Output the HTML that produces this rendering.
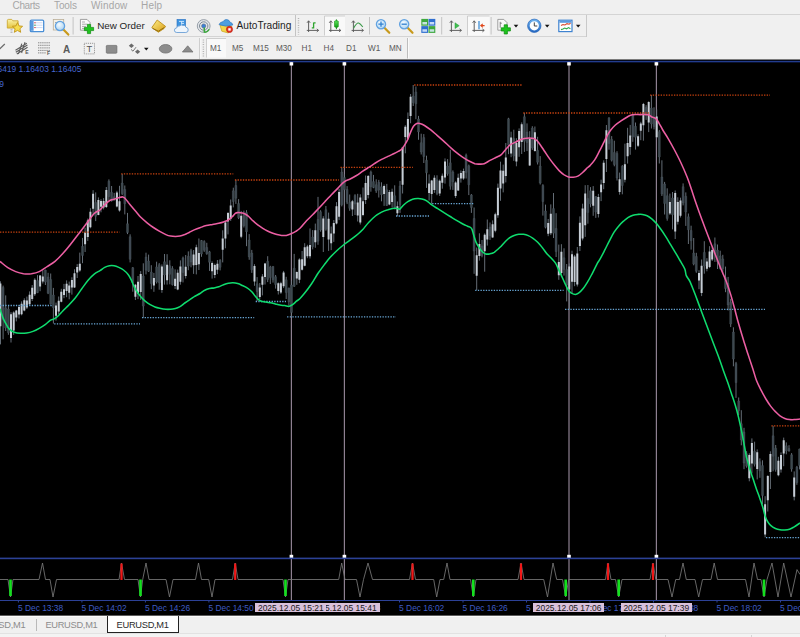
<!DOCTYPE html>
<html><head><meta charset="utf-8"><title>EURUSD,M1</title>
<style>
html,body{margin:0;padding:0;}
body{width:800px;height:637px;overflow:hidden;background:#000;font-family:"Liberation Sans","DejaVu Sans",sans-serif;position:relative;}
.abs{position:absolute;}
#top{left:0;top:0;width:800px;height:59px;background:#f0f0f0;}
#menu span{position:absolute;top:0.3px;font-size:10px;color:#a6a6a6;line-height:1.15;}
.hsep{position:absolute;left:0;width:800px;height:1px;background:#d4d4d4;}
#navy{left:0;top:59px;width:800px;height:4px;background:linear-gradient(#7c7c7c 0,#7c7c7c 25%,#050a1c 25%,#050a1c 50%,#223c8e 50%,#223c8e 75%,#0a1230 75%,#0a1230 100%);}
.chart{position:absolute;left:0;top:61px;}
.ctext{position:absolute;font-size:8.4px;color:#4666cf;white-space:nowrap;}
.tl{position:absolute;top:603.8px;font-size:8.4px;color:#3f5cc4;white-space:nowrap;line-height:1.15;}
.tb{position:absolute;top:603px;height:9.4px;line-height:10.6px;font-size:8.45px;color:#1a1a1a;background:#d9c1db;white-space:nowrap;overflow:hidden;text-align:center;}
.tt{position:absolute;white-space:nowrap;line-height:1.15;}
.tf{position:absolute;top:44.3px;font-size:8.2px;color:#5a5a5a;white-space:nowrap;line-height:1.15;}
#tabs{left:0;top:615px;width:800px;height:22px;background:#f0f0f0;}
.tab{position:absolute;top:5.3px;font-size:9.3px;letter-spacing:-0.3px;white-space:nowrap;line-height:1.15;}
</style></head><body>
<div id="top" class="abs">
 <div id="menu">
  <span style="left:12.6px;letter-spacing:-0.4px">Charts</span><span style="left:54px;letter-spacing:-0.1px">Tools</span><span style="left:91px;letter-spacing:0.15px">Window</span><span style="left:141px;letter-spacing:0.2px">Help</span>
 </div>
 <div class="hsep" style="top:14px"></div>
 <div class="hsep" style="top:36.1px;width:587px"></div>
 <svg class="abs" style="left:0;top:0" width="800" height="60" viewBox="0 0 800 60">
<defs>
<linearGradient id="gold" x1="0" y1="0" x2="1" y2="1"><stop offset="0" stop-color="#fdf08a"/><stop offset="1" stop-color="#d99a12"/></linearGradient>
<linearGradient id="fold" x1="0" y1="0" x2="0" y2="1"><stop offset="0" stop-color="#fbf3a8"/><stop offset="1" stop-color="#e4c23c"/></linearGradient>
<linearGradient id="blu" x1="0" y1="0" x2="0" y2="1"><stop offset="0" stop-color="#6fb2ee"/><stop offset="1" stop-color="#2a6cc4"/></linearGradient>
<linearGradient id="grn" x1="0" y1="0" x2="0" y2="1"><stop offset="0" stop-color="#5ce35c"/><stop offset="1" stop-color="#12a012"/></linearGradient>
<radialGradient id="lens" cx="0.4" cy="0.35" r="0.7"><stop offset="0" stop-color="#f4fbff"/><stop offset="1" stop-color="#a9d2f1"/></radialGradient>
<g id="plus"><path d="M-1.6 -4.6h3.2v3h3v3.2h-3v3h-3.2v-3h-3v-3.2h3z" fill="#1fc41f" stroke="#0c8a0c" stroke-width="0.7"/></g>
<g id="dd"><path d="M-2.3 -1.2h4.6l-2.3 2.6z" fill="#111"/></g>
<g id="axes" stroke="#585858" stroke-width="0.95" fill="none"><path d="M0 -9.5V1.6M-1.8 0H10"/><path d="M-1.6 -7.6L0 -9.6L1.6 -7.6M8.2 -1.5L10 0L8.2 1.5" stroke-width="0.9"/></g>
<g id="mag"><path d="M3.4 3.6L8.3 8.6" stroke="#c89a1c" stroke-width="2.2" stroke-linecap="round"/><circle cx="0" cy="0" r="4.6" fill="url(#lens)" stroke="#62a2e0" stroke-width="1.3"/></g>
</defs>
<!-- toolbar 1 -->
<!-- folder + star -->
<path d="M7.3 20.6q0-1.2 1.2-1.2h3.2l1.2 1.4h5.2v7.3H7.3z" fill="url(#fold)" stroke="#c9a227" stroke-width="0.8"/>
<path d="M10.5 29.5h2M10.5 31h2M10.5 32.5h2" stroke="#999" stroke-width="0.6"/>
<path d="M17.5 22.6l1.5 3.3 3.6.4-2.7 2.4.8 3.6-3.2-1.9-3.2 1.9.8-3.6-2.7-2.4 3.6-.4z" fill="#f6dc4e" stroke="#c2951a" stroke-width="0.9" stroke-linejoin="round"/>
<!-- list icon -->
<rect x="30.3" y="20.2" width="13.4" height="11.4" rx="1.2" fill="#fff" stroke="#4a8fd6" stroke-width="1.3"/>
<rect x="31" y="21" width="2.6" height="9.8" fill="#5a9ade"/>
<path d="M34.5 22.8h8M34.5 25.2h8M34.5 27.6h8" stroke="#c8d8f4" stroke-width="1"/>
<path d="M34.2 22.8h1.5M34.2 27.6h1.5" stroke="#e04848" stroke-width="1"/><path d="M34.2 25.2h1.5" stroke="#3a9a4a" stroke-width="1"/>
<!-- chart magnifier -->
<rect x="53.3" y="19.4" width="10.4" height="10.6" fill="#f4f1e8" stroke="#b9ae98" stroke-width="0.8"/>
<path d="M55 22.500h1.500M58 22h1.500M61 22.500h1.500M55 27.500h7" stroke="#8a8a8a" stroke-width="0.700"/><use href="#mag" x="60" y="26"/>
<rect x="72.6" y="17" width="1" height="17.5" fill="#c3c3c3"/>
<!-- new order -->
<path d="M80.4 19.4h6.6l3 3v7.8h-9.6z" fill="#fafafa" stroke="#8a8a8a" stroke-width="0.8"/>
<path d="M82 22h3M82 24.2h5.5M82 26.4h4M82 28.4h3" stroke="#8a8a8a" stroke-width="0.7"/>
<use href="#plus" x="89" y="29"/>
<!-- gold book -->
<path d="M151.8 27.6L157.2 20L165.6 26.4L164 28.6L158.4 32.2Z" fill="url(#gold)" stroke="#b8860b" stroke-width="0.8" stroke-linejoin="round"/>
<path d="M152.6 28.4L158.4 31.2L164.4 27.4" stroke="#8a6508" stroke-width="0.9" fill="none"/>
<!-- cloud -->
<rect x="177" y="19.400" width="8.600" height="7.600" fill="#3f95e0" stroke="#2a70c0" stroke-width="0.600"/>
<path d="M179 21.400h5M181.600 21.400v4M181.600 23.400h2.400" stroke="#d8ecff" stroke-width="0.900"/>
<path d="M176.800 32.500q-2.400 0-2.400-2.300q0-2.100 2.300-2.300q.5-2.300 2.900-2q1.500-1.700 3.400-.5q2.400-.6 2.900 1.800q2.300.3 2.300 2.700q0 2.600-2.400 2.600z" fill="#eef5fc" stroke="#6b9fd6" stroke-width="0.900"/>
<!-- signal -->
<circle cx="203.7" cy="26" r="6.4" fill="#e4e7ea" stroke="#8d96a0" stroke-width="0.9"/>
<circle cx="203.7" cy="26" r="4.2" fill="none" stroke="#7f8a96" stroke-width="1"/>
<circle cx="203.7" cy="26" r="2.1" fill="#3a7fd8" stroke="#5a6a7a" stroke-width="0.6"/>
<path d="M204.300 27.500v5" stroke="#3aa83a" stroke-width="1.500" fill="none"/><path d="M204.300 32.400A6.400 6.400 0 0 0 209.300 29.200" stroke="#3aa83a" stroke-width="1.300" fill="none"/>
<!-- autotrading -->
<path d="M220 25.200l1.800 6 6.500 1.800 3.600-6.500z" fill="#f3d64a" stroke="#c9a21a" stroke-width="0.7"/>
<path d="M219 24.600q1-2.600 4.200-3q1.200-2.400 3.600-2q2.600.2 3 2.400q2.800.8 3 3q-6.800 2.400-13.800-.4z" fill="#4d9fe0" stroke="#2f77c0" stroke-width="0.7"/>
<circle cx="229.500" cy="29.400" r="3.100" fill="#e33222" stroke="#b11b10" stroke-width="0.6"/><rect x="228.300" y="28.200" width="2.400" height="2.400" fill="#fff"/>
<!-- sep + grip -->
<rect x="295" y="15" width="1" height="21" fill="#c3c3c3"/>
<path d="M298.500 18v16.500" stroke="#b4b4b4" stroke-width="1.400" stroke-dasharray="1 1.300"/>
<!-- bar chart -->
<use href="#axes" x="308.600" y="30.400"/>
<path d="M313.600 22.400v6.200M313.600 22.800h2M311.800 27.800h1.800" stroke="#2fa52f" stroke-width="1.300" fill="none"/>
<!-- candle (selected) -->
<rect x="324.500" y="16" width="20.500" height="19.500" fill="#f9f9f9"/><path d="M324.500 35.500V16H345" stroke="#c9c9c9" stroke-width="0.9" fill="none"/>
<use href="#axes" x="330.800" y="30.400"/>
<path d="M336.400 19.400v9.800" stroke="#1c8a1c" stroke-width="1"/><rect x="334.500" y="20.800" width="3.800" height="6.400" rx="0.800" fill="url(#grn)" stroke="#149014" stroke-width="0.600"/>
<!-- line chart -->
<use href="#axes" x="353.400" y="30.400"/>
<path d="M353.600 28.200q3-5.600 5-5.200q1.600.6 4.200 4" stroke="#3c9a4a" stroke-width="1.100" fill="none"/>
<rect x="369" y="17" width="1" height="17.500" fill="#c3c3c3"/>
<!-- zoom in/out -->
<use href="#mag" x="381" y="24.200"/><path d="M378.400 24.200h5.200M381 21.600v5.200" stroke="#2f7fd0" stroke-width="1.300"/>
<use href="#mag" x="404.200" y="24.200"/><path d="M401.600 24.200h5.200" stroke="#2f7fd0" stroke-width="1.300"/>
<!-- tiles -->
<rect x="421.300" y="18.900" width="6.800" height="6.800" fill="#3fa83f"/><rect x="428.500" y="18.900" width="6.800" height="6.800" fill="#2f6fd0"/>
<rect x="421.300" y="26.100" width="6.800" height="6.800" fill="#2f6fd0"/><rect x="428.500" y="26.100" width="6.800" height="6.800" fill="#3fa83f"/>
<path d="M422.400 22h4.600v2.600h-4.600zM429.600 22h4.600v2.600h-4.600zM422.400 29.200h4.600v2.600h-4.600zM429.600 29.200h4.600v2.600h-4.600z" fill="#dfeeff" opacity="0.850"/>
<rect x="441.200" y="17" width="1" height="17.500" fill="#c3c3c3"/>
<!-- shift -->
<use href="#axes" x="451.400" y="30.400"/>
<path d="M455 22.800v5.800l4.200-2.900z" fill="#3fbf4f" stroke="#2a9a3a" stroke-width="0.500"/>
<!-- autoscroll selected -->
<rect x="467.500" y="16" width="22" height="19.500" fill="#f9f9f9"/><path d="M467.500 35.500V16H489.500" stroke="#c9c9c9" stroke-width="0.900" fill="none"/>
<use href="#axes" x="474.200" y="30.400"/>
<path d="M479 21v8.200" stroke="#3f8fd6" stroke-width="1.300"/>
<path d="M484.600 25.600h-3.600M482.800 23.800l-2 1.800 2 1.800" stroke="#e0481c" stroke-width="1.100" fill="none"/>
<rect x="490.600" y="17" width="1" height="17.500" fill="#c3c3c3"/>
<!-- new chart -->
<path d="M497.800 19.400h6l3.200 3.200v7.600h-9.200z" fill="#fafafa" stroke="#8a8a8a" stroke-width="0.800"/>
<path d="M500.200 21.800v6M500.200 23.200h1.600" stroke="#666" stroke-width="0.800"/>
<use href="#plus" x="505.800" y="29.400"/>
<use href="#dd" x="516" y="26"/>
<!-- clock -->
<circle cx="534.300" cy="25.800" r="5.700" fill="#fff" stroke="url(#blu)" stroke-width="2.200"/>
<circle cx="534.300" cy="25.800" r="6.700" fill="none" stroke="#1d5db4" stroke-width="0.600"/>
<path d="M534.300 22.400v3.600h3" stroke="#444" stroke-width="1" fill="none"/>
<use href="#dd" x="547.200" y="26"/>
<!-- template -->
<rect x="558.800" y="20.200" width="13.200" height="11.400" fill="#fff" stroke="#3f83d0" stroke-width="1.200"/>
<rect x="559.400" y="20.800" width="12" height="2" fill="#5a9ade"/>
<path d="M561 25.600l2-1 2 .4 2-1.400 2 .6 1.600-1" stroke="#d8482c" stroke-width="1.100" fill="none"/>
<path d="M561 29.600l2-.6 1.600-1 2 .8 2-1.200 1.800 1.200" stroke="#2fa84a" stroke-width="1.100" fill="none"/>
<use href="#dd" x="578.200" y="26"/>
<rect x="586" y="15" width="1" height="22" fill="#c9c9c9"/>
<!-- toolbar 2 -->
<path d="M-0.500 49.200L4.800 44" stroke="#6a6a6a" stroke-width="1.200"/>
<g stroke="#5c5c5c" stroke-width="1.050" fill="none"><path d="M15.500 50.200L26.800 43.200M15.800 52.200L27.400 45M16.800 54L27.600 47.200M18.400 54L21.800 43.600M21.600 53L25 42.200" /></g>
<g stroke="#7a7a7a" stroke-width="0.900" stroke-dasharray="1.400 0.700"><path d="M38 42.800h12M38 45.300h12M38 47.900h12M38 50.400h12M38 52.900h8"/></g>
<rect x="84.300" y="43.300" width="10.200" height="10.600" fill="none" stroke="#7a7a7a" stroke-width="0.800" stroke-dasharray="1 0.900"/>
<rect x="106.300" y="45.400" width="10.600" height="7.800" rx="0.800" fill="#8c8c8c" stroke="#6a6a6a" stroke-width="0.700"/>
<path d="M131.400 43.600l2.600 2.200-2.600 2.200-2.600-2.200zM137.600 49.600l2.600 2.200-2.600 2.200-2.600-2.200z" fill="#6a6a6a"/><path d="M131 49.400l2 1.800 3-4" stroke="#6a6a6a" stroke-width="0.900" fill="none"/>
<use href="#dd" x="146.300" y="49"/>
<ellipse cx="165.600" cy="48.800" rx="6.300" ry="4.300" fill="#8c8c8c" stroke="#6a6a6a" stroke-width="0.700"/>
<path d="M182.400 52l5.300-6.200 5.300 6.200z" fill="#8c8c8c" stroke="#6a6a6a" stroke-width="0.700" stroke-linejoin="round"/>
<rect x="199.200" y="38" width="1" height="21" fill="#c6c6c6"/><rect x="200.200" y="38" width="1" height="21" fill="#fafafa"/><path d="M203.400 39.500v18" stroke="#b4b4b4" stroke-width="1.400" stroke-dasharray="1 1.300"/>
<rect x="206.500" y="38.500" width="19.500" height="19" fill="#f9f9f9"/><path d="M206.500 57.500V38.500H226" stroke="#c9c9c9" stroke-width="0.900" fill="none"/>
<rect x="407" y="38" width="1" height="20.500" fill="#bdbdbd"/><rect x="408" y="38" width="1" height="20.500" fill="#fafafa"/>
</svg>
<div class="tt" style="left:97.2px;top:20px;font-size:9.85px;color:#1e1e1e">New Order</div>
<div class="tt" style="left:236.6px;top:20px;font-size:10.15px;color:#1e1e1e">AutoTrading</div>
<div class="tt" style="left:25.200px;top:50.200px;font-size:5px;font-weight:bold;color:#555">E</div>
<div class="tt" style="left:47px;top:50.600px;font-size:5px;font-weight:bold;color:#555">F</div>
<div class="tt" style="left:63px;top:44px;font-size:10px;font-weight:bold;color:#5a5a5a">A</div>
<div class="tt" style="left:86.4px;top:44.4px;font-size:9.400px;color:#555">T</div>
<div class="tf" style="left:210px">M1</div><div class="tf" style="left:232px">M5</div><div class="tf" style="left:253px">M15</div><div class="tf" style="left:276px">M30</div><div class="tf" style="left:301.500px">H1</div><div class="tf" style="left:323.500px">H4</div><div class="tf" style="left:346px">D1</div><div class="tf" style="left:368px">W1</div><div class="tf" style="left:389px">MN</div>

</div>
<div id="navy" class="abs"></div>
<svg class="chart" width="800" height="555" viewBox="0 0 800 555"><defs><filter id="bl" x="0" y="0" width="100%" height="100%"><feGaussianBlur stdDeviation="0.35"/></filter></defs>
<rect x="290.8" y="1" width="1.2" height="539" fill="#8e8091"/>
<rect x="343.8" y="1" width="1.2" height="539" fill="#8e8091"/>
<rect x="568.4" y="1" width="1.2" height="539" fill="#8e8091"/>
<rect x="655.8" y="1" width="1.2" height="539" fill="#8e8091"/>
<g filter="url(#bl)"><path d="M0.5 220.3V283.4M3.1 224.6V278.3M5.7 234.4V270.0M8.4 245.1V273.8M11.0 251.2V281.5M13.7 250.3V273.9M16.3 248.9V260.4M19.0 244.0V257.4M21.6 240.4V254.3M24.3 237.3V250.3M26.9 235.6V248.0M29.6 230.4V244.5M32.2 224.0V240.0M34.8 217.2V235.0M37.5 214.1V232.1M40.1 214.0V230.2M42.8 209.3V222.5M45.4 208.7V224.0M48.1 211.8V233.1M50.7 212.5V243.5M53.4 226.9V262.6M56.0 241.6V259.6M58.7 235.5V253.2M61.3 227.8V241.3M64.0 222.9V237.2M66.6 219.4V236.2M69.2 220.6V238.3M71.9 216.3V233.6M74.5 208.3V226.8M77.2 203.1V217.0M79.8 191.6V210.8M82.5 176.9V202.2M85.1 166.7V191.0M87.8 157.6V179.9M90.4 147.2V167.3M93.1 129.2V153.8M95.7 131.4V160.1M98.4 136.4V154.2M101.0 138.2V151.3M103.6 137.1V148.4M106.3 126.0V147.0M108.9 118.4V139.0M111.6 125.0V140.6M114.2 131.9V139.6M116.9 129.8V146.4M119.5 124.8V150.7M122.2 113.0V134.0M124.8 124.5V153.4M127.5 151.9V173.1M130.1 173.3V201.4M132.8 206.0V230.7M135.4 222.9V239.0M138.0 215.0V238.1M140.7 210.1V238.9M143.3 202.3V256.7M146.0 191.7V213.4M148.6 193.6V211.0M151.3 204.2V228.2M153.9 211.9V230.8M156.6 200.7V222.5M159.2 202.1V228.7M161.9 203.4V231.8M164.5 193.0V223.6M167.1 193.2V223.6M169.8 199.3V223.3M172.4 205.2V224.5M175.1 208.4V228.0M177.7 208.6V229.2M180.4 199.4V223.7M183.0 195.6V221.4M185.7 194.0V217.5M188.3 190.4V209.2M191.0 187.8V206.3M193.6 189.0V212.9M196.3 183.7V213.4M198.9 177.5V209.0M201.5 179.0V195.8M204.2 179.3V190.9M206.8 181.8V193.8M209.5 189.9V209.9M212.1 200.4V217.6M214.8 202.6V217.1M217.4 199.0V213.1M220.1 198.2V209.4M222.7 169.3V201.4M225.4 160.9V187.3M228.0 151.1V173.4M230.7 138.5V159.9M233.3 126.7V146.4M235.9 118.8V142.9M238.6 138.1V158.1M241.2 149.9V177.2M243.9 149.6V166.5M246.5 149.1V185.2M249.2 173.1V198.8M251.8 188.9V211.9M254.5 203.2V224.8M257.1 216.1V240.2M259.8 222.0V238.1M262.4 213.1V234.4M265.0 201.9V223.5M267.7 195.2V221.1M270.3 204.8V223.0M273.0 205.2V221.6M275.6 214.0V227.6M278.3 221.4V233.5M280.9 220.8V232.9M283.6 209.9V227.1M286.2 215.8V238.0M288.9 226.7V244.8M291.5 219.6V256.0M294.2 192.9V226.0M296.8 210.5V223.8M299.4 197.3V222.1M302.1 190.0V209.5M304.7 182.2V205.3M307.4 183.8V197.2M310.0 167.5V197.5M312.7 169.1V188.4M315.3 162.6V186.8M318.0 135.9V183.8M320.6 149.2V170.7M323.3 155.2V191.0M325.9 145.0V169.7M328.6 151.6V189.9M331.2 165.5V189.1M333.8 159.0V180.9M336.5 141.1V163.4M339.1 127.9V159.1M341.8 106.2V145.4M344.4 113.1V143.5M347.1 125.1V143.1M349.7 133.5V149.8M352.4 138.9V155.0M355.0 133.2V154.0M357.7 132.8V160.5M360.3 133.3V163.5M363.0 126.5V155.2M365.6 114.5V143.0M368.2 114.0V137.4M370.9 109.6V130.7M373.5 113.9V127.2M376.2 118.3V131.9M378.8 118.9V136.5M381.5 121.3V140.3M384.1 123.5V144.9M386.8 122.9V144.9M389.4 129.0V144.2M392.1 127.7V146.6M394.7 124.3V148.4M397.4 140.5V155.2M400.0 119.9V151.9M402.6 85.9V132.5M405.3 64.2V92.3M407.9 51.5V78.9M410.6 33.0V62.3M413.2 24.0V45.0M415.9 25.5V58.2M418.5 54.9V78.8M421.2 72.7V93.5M423.8 73.1V102.0M426.5 94.7V126.9M429.1 113.4V139.5M431.7 118.9V142.7M434.4 114.3V131.9M437.0 114.3V134.2M439.7 118.5V135.0M442.3 112.5V127.7M445.0 97.4V122.6M447.6 98.1V114.7M450.3 88.8V128.7M452.9 109.4V128.9M455.6 120.3V136.9M458.2 112.7V129.9M460.9 109.5V121.6M463.5 107.6V118.8M466.1 92.6V117.5M468.8 103.6V134.1M471.4 133.1V151.9M474.1 146.5V212.8M476.7 186.5V229.0M479.4 172.3V199.6M482.0 179.0V196.3M484.7 172.4V210.7M487.3 158.5V184.6M490.0 161.5V178.9M492.6 159.4V176.7M495.3 151.7V171.3M497.9 122.6V156.8M500.5 100.7V139.8M503.2 103.6V131.4M505.8 82.0V121.4M508.5 56.8V93.2M511.1 70.7V96.2M513.8 68.7V99.9M516.4 77.2V105.3M519.1 67.4V95.8M521.7 61.4V93.0M524.4 51.9V90.9M527.0 62.4V90.1M529.7 70.2V104.8M532.3 65.2V88.9M534.9 65.5V90.7M537.6 75.8V103.5M540.2 95.1V123.5M542.9 123.2V154.6M545.5 143.6V167.4M548.2 158.0V175.2M550.8 143.4V174.1M553.5 132.0V177.0M556.1 152.2V196.0M558.8 183.6V218.8M561.4 183.2V216.2M564.0 187.3V214.6M566.7 203.0V240.4M569.3 202.4V248.3M572.0 189.7V232.5M574.6 193.9V225.2M577.3 186.0V225.5M579.9 155.4V190.0M582.6 142.7V179.4M585.2 124.2V175.9M587.9 124.0V162.7M590.5 126.1V146.3M593.2 125.1V154.8M595.8 135.3V156.9M598.4 132.9V156.5M601.1 118.7V140.1M603.7 99.3V128.2M606.4 64.0V111.0M609.0 56.3V88.7M611.7 75.1V100.5M614.3 79.7V105.3M617.0 90.2V119.5M619.6 111.6V133.7M622.3 104.1V133.3M624.9 82.7V121.4M627.6 66.8V102.6M630.2 63.9V93.8M632.8 52.8V80.8M635.5 61.5V88.6M638.1 73.3V86.0M640.8 60.8V79.2M643.4 41.9V79.7M646.1 44.2V58.9M648.7 40.3V71.1M651.4 34.0V67.5M654.0 46.3V68.4M656.7 48.4V76.8M659.3 68.9V102.5M661.9 99.3V135.0M664.6 120.9V153.5M667.2 127.3V159.7M669.9 132.6V154.0M672.5 131.0V168.4M675.2 129.5V178.0M677.8 136.3V163.5M680.5 136.7V156.5M683.1 122.4V144.4M685.8 131.4V164.9M688.4 152.5V183.0M691.1 164.7V188.6M693.7 177.0V204.3M696.3 191.8V211.8M699.0 209.2V228.2M701.6 198.5V235.1M704.3 180.2V212.7M706.9 197.2V210.3M709.6 185.2V207.1M712.2 186.2V200.0M714.9 176.5V200.9M717.5 183.5V208.0M720.2 189.7V208.4M722.8 193.8V212.0M725.5 205.6V231.2M728.1 215.9V249.5M730.7 237.8V266.1M733.4 266.3V305.3M736.0 300.9V336.9M738.7 336.5V354.1M741.3 349.2V384.3M744.0 366.8V408.2M746.6 390.2V406.7M749.3 392.3V420.3M751.9 377.4V412.5M754.6 380.7V405.5M757.2 388.4V418.4M759.9 397.4V416.8M762.5 399.3V443.3M765.1 435.2V476.4M767.8 414.2V450.5M770.4 390.3V428.0M773.1 364.8V410.3M775.7 384.0V410.7M778.4 395.8V415.3M781.0 391.4V411.6M783.7 376.6V405.2M786.3 381.4V393.3M789.0 384.2V390.7M791.6 392.1V410.7M794.2 410.4V439.4M796.9 404.9V423.8M799.5 387.7V408.4" stroke="#6f7983" stroke-width="0.9" fill="none"/>
<path d="M2.1 226.4h2.0v32.4h-2.0zM4.7 246.8h2.0v20.1h-2.0zM7.4 248.0h2.0v23.7h-2.0zM36.5 219.6h2.0v12.1h-2.0zM44.4 209.1h2.0v12.0h-2.0zM47.1 216.0h2.0v16.2h-2.0zM49.7 218.4h2.0v24.6h-2.0zM52.4 234.0h2.0v12.7h-2.0zM81.5 185.3h2.0v9.2h-2.0zM94.7 141.5h2.0v13.8h-2.0zM107.9 120.2h2.0v15.3h-2.0zM110.6 131.3h2.0v8.6h-2.0zM113.2 135.7h2.0v3.3h-2.0zM121.2 122.0h2.0v10.7h-2.0zM123.8 128.4h2.0v14.3h-2.0zM126.5 162.7h2.0v8.8h-2.0zM129.1 175.7h2.0v22.6h-2.0zM131.8 206.7h2.0v15.1h-2.0zM142.3 215.1h2.0v30.0h-2.0zM145.0 196.1h2.0v13.1h-2.0zM147.6 200.0h2.0v10.3h-2.0zM150.3 211.1h2.0v11.5h-2.0zM155.6 205.9h2.0v15.0h-2.0zM158.2 203.7h2.0v18.0h-2.0zM163.5 200.7h2.0v13.2h-2.0zM168.8 204.7h2.0v8.6h-2.0zM171.4 207.5h2.0v16.3h-2.0zM182.0 196.9h2.0v14.5h-2.0zM187.3 195.3h2.0v9.7h-2.0zM190.0 189.7h2.0v11.3h-2.0zM200.5 179.4h2.0v13.7h-2.0zM203.2 180.4h2.0v8.9h-2.0zM205.8 186.4h2.0v6.3h-2.0zM208.5 190.8h2.0v10.5h-2.0zM219.1 199.3h2.0v7.0h-2.0zM232.3 129.8h2.0v10.7h-2.0zM234.9 124.5h2.0v12.7h-2.0zM237.6 142.5h2.0v14.3h-2.0zM242.9 153.1h2.0v11.6h-2.0zM245.5 151.5h2.0v19.2h-2.0zM248.2 178.9h2.0v17.0h-2.0zM250.8 192.1h2.0v16.7h-2.0zM256.1 222.8h2.0v7.7h-2.0zM266.7 200.3h2.0v18.1h-2.0zM269.3 205.9h2.0v10.7h-2.0zM272.0 205.4h2.0v13.4h-2.0zM274.6 215.7h2.0v7.8h-2.0zM285.2 218.8h2.0v12.8h-2.0zM287.9 226.9h2.0v13.9h-2.0zM290.5 223.9h2.0v27.6h-2.0zM293.2 207.2h2.0v18.1h-2.0zM311.7 176.0h2.0v9.7h-2.0zM317.0 158.5h2.0v21.7h-2.0zM319.6 150.7h2.0v18.2h-2.0zM324.9 148.7h2.0v19.6h-2.0zM340.8 111.0h2.0v32.8h-2.0zM343.4 116.5h2.0v12.3h-2.0zM346.1 128.4h2.0v12.8h-2.0zM348.7 141.3h2.0v6.0h-2.0zM354.0 134.6h2.0v8.5h-2.0zM369.9 111.1h2.0v14.6h-2.0zM372.5 120.6h2.0v6.0h-2.0zM375.2 123.7h2.0v6.2h-2.0zM377.8 121.3h2.0v7.8h-2.0zM380.5 125.7h2.0v8.0h-2.0zM385.8 128.8h2.0v15.8h-2.0zM393.7 134.7h2.0v12.7h-2.0zM399.0 125.0h2.0v18.8h-2.0zM412.2 35.1h2.0v6.6h-2.0zM414.9 30.9h2.0v11.9h-2.0zM417.5 57.9h2.0v13.0h-2.0zM420.2 81.7h2.0v9.2h-2.0zM422.8 76.6h2.0v18.9h-2.0zM425.5 99.2h2.0v12.6h-2.0zM436.0 118.8h2.0v13.7h-2.0zM446.6 105.0h2.0v7.7h-2.0zM449.3 101.8h2.0v23.5h-2.0zM451.9 111.0h2.0v9.7h-2.0zM465.1 94.3h2.0v17.1h-2.0zM467.8 104.8h2.0v19.0h-2.0zM470.4 133.9h2.0v12.6h-2.0zM473.1 157.5h2.0v32.6h-2.0zM481.0 184.9h2.0v9.7h-2.0zM489.0 166.1h2.0v8.6h-2.0zM507.5 57.7h2.0v26.5h-2.0zM512.8 77.5h2.0v17.6h-2.0zM523.4 55.7h2.0v24.5h-2.0zM526.0 71.1h2.0v10.4h-2.0zM531.3 67.1h2.0v19.9h-2.0zM536.6 89.3h2.0v11.9h-2.0zM539.2 105.0h2.0v17.1h-2.0zM541.9 124.5h2.0v16.0h-2.0zM544.5 149.9h2.0v16.4h-2.0zM552.5 147.6h2.0v24.6h-2.0zM555.1 167.4h2.0v23.2h-2.0zM563.0 196.8h2.0v11.6h-2.0zM565.7 208.5h2.0v15.6h-2.0zM586.9 137.6h2.0v13.8h-2.0zM589.5 129.7h2.0v13.2h-2.0zM594.8 135.6h2.0v15.3h-2.0zM608.0 56.8h2.0v25.6h-2.0zM610.7 78.3h2.0v20.9h-2.0zM613.3 91.5h2.0v12.0h-2.0zM616.0 92.4h2.0v24.6h-2.0zM621.3 105.2h2.0v19.3h-2.0zM631.8 53.4h2.0v22.3h-2.0zM634.5 65.3h2.0v11.0h-2.0zM645.1 46.5h2.0v7.9h-2.0zM650.4 47.1h2.0v15.8h-2.0zM653.0 56.8h2.0v8.8h-2.0zM658.3 70.7h2.0v25.2h-2.0zM660.9 116.0h2.0v17.1h-2.0zM663.6 122.9h2.0v19.5h-2.0zM666.2 134.7h2.0v22.7h-2.0zM671.5 136.9h2.0v16.9h-2.0zM682.1 125.7h2.0v16.2h-2.0zM684.8 135.3h2.0v15.7h-2.0zM687.4 155.8h2.0v13.0h-2.0zM690.1 169.4h2.0v10.3h-2.0zM692.7 192.0h2.0v11.0h-2.0zM695.3 195.4h2.0v14.9h-2.0zM703.3 191.4h2.0v13.7h-2.0zM713.9 182.8h2.0v9.7h-2.0zM716.5 189.1h2.0v11.6h-2.0zM719.2 194.9h2.0v12.8h-2.0zM721.8 197.9h2.0v9.9h-2.0zM724.5 216.6h2.0v11.0h-2.0zM727.1 222.5h2.0v21.4h-2.0zM729.7 241.3h2.0v21.7h-2.0zM732.4 271.1h2.0v27.0h-2.0zM735.0 302.6h2.0v19.0h-2.0zM737.7 339.9h2.0v9.8h-2.0zM740.3 362.7h2.0v16.2h-2.0zM743.0 370.9h2.0v31.1h-2.0zM745.6 392.7h2.0v12.5h-2.0zM753.6 390.2h2.0v13.1h-2.0zM758.9 400.7h2.0v9.1h-2.0zM761.5 404.6h2.0v29.9h-2.0zM772.1 374.8h2.0v20.4h-2.0zM774.7 387.2h2.0v21.2h-2.0zM785.3 384.8h2.0v5.1h-2.0zM788.0 387.6h2.0v2.3h-2.0zM790.6 393.8h2.0v14.3h-2.0zM795.9 406.1h2.0v15.4h-2.0zM798.5 388.0h2.0v16.5h-2.0z" fill="#3e4850" stroke="#56616b" stroke-width="0.3"/>
<path d="M-0.6 222.6h2.0v42.7h-2.0zM10.0 253.3h2.0v23.6h-2.0zM12.7 251.5h2.0v17.9h-2.0zM15.3 249.4h2.0v7.2h-2.0zM18.0 245.9h2.0v7.6h-2.0zM20.6 242.8h2.0v10.4h-2.0zM23.3 239.2h2.0v10.2h-2.0zM25.9 239.6h2.0v6.9h-2.0zM28.6 233.7h2.0v9.6h-2.0zM31.2 226.8h2.0v11.1h-2.0zM33.8 218.7h2.0v14.6h-2.0zM39.1 214.4h2.0v11.1h-2.0zM41.8 215.4h2.0v5.0h-2.0zM55.0 244.6h2.0v10.1h-2.0zM57.7 239.7h2.0v10.8h-2.0zM60.3 230.7h2.0v10.0h-2.0zM63.0 228.2h2.0v5.7h-2.0zM65.6 222.8h2.0v7.3h-2.0zM68.2 224.6h2.0v7.1h-2.0zM70.9 219.1h2.0v7.3h-2.0zM73.5 212.3h2.0v14.3h-2.0zM76.2 206.0h2.0v5.6h-2.0zM78.8 202.7h2.0v6.9h-2.0zM84.1 171.5h2.0v11.7h-2.0zM86.8 159.6h2.0v16.5h-2.0zM89.4 150.7h2.0v15.6h-2.0zM92.1 132.8h2.0v15.0h-2.0zM97.4 138.9h2.0v15.0h-2.0zM100.0 139.9h2.0v5.9h-2.0zM102.6 140.0h2.0v6.6h-2.0zM105.3 129.1h2.0v16.9h-2.0zM115.9 131.5h2.0v13.9h-2.0zM118.5 140.2h2.0v9.2h-2.0zM134.4 223.7h2.0v12.1h-2.0zM137.0 220.8h2.0v11.8h-2.0zM139.7 213.0h2.0v18.1h-2.0zM152.9 216.9h2.0v7.7h-2.0zM160.9 205.4h2.0v23.5h-2.0zM166.1 203.7h2.0v15.5h-2.0zM174.1 217.7h2.0v7.2h-2.0zM176.7 211.8h2.0v16.6h-2.0zM179.4 205.4h2.0v15.4h-2.0zM184.7 205.7h2.0v9.2h-2.0zM192.6 193.4h2.0v10.8h-2.0zM195.3 186.2h2.0v17.9h-2.0zM197.9 191.9h2.0v11.3h-2.0zM211.1 202.1h2.0v8.2h-2.0zM213.8 204.0h2.0v9.9h-2.0zM216.4 202.7h2.0v6.0h-2.0zM221.7 177.5h2.0v11.2h-2.0zM224.4 161.5h2.0v15.9h-2.0zM227.0 152.1h2.0v8.3h-2.0zM229.7 144.5h2.0v13.2h-2.0zM240.2 154.8h2.0v20.9h-2.0zM253.5 204.9h2.0v15.5h-2.0zM258.8 226.4h2.0v9.5h-2.0zM261.4 215.5h2.0v8.3h-2.0zM264.0 202.4h2.0v13.7h-2.0zM277.3 222.2h2.0v7.8h-2.0zM279.9 222.2h2.0v9.2h-2.0zM282.6 211.6h2.0v13.7h-2.0zM295.8 211.1h2.0v6.5h-2.0zM298.4 198.6h2.0v20.2h-2.0zM301.1 198.2h2.0v10.5h-2.0zM303.7 186.2h2.0v18.6h-2.0zM306.4 185.6h2.0v9.6h-2.0zM309.0 184.1h2.0v11.2h-2.0zM314.3 169.2h2.0v12.1h-2.0zM322.3 157.4h2.0v18.7h-2.0zM327.6 157.8h2.0v20.6h-2.0zM330.2 172.5h2.0v9.8h-2.0zM332.8 162.0h2.0v10.6h-2.0zM335.5 145.3h2.0v17.3h-2.0zM338.1 130.9h2.0v24.9h-2.0zM351.4 140.3h2.0v8.1h-2.0zM356.7 141.6h2.0v12.8h-2.0zM359.3 136.5h2.0v25.1h-2.0zM362.0 140.3h2.0v13.6h-2.0zM364.6 122.0h2.0v17.0h-2.0zM367.2 115.1h2.0v19.0h-2.0zM383.1 124.9h2.0v8.1h-2.0zM388.4 131.0h2.0v12.4h-2.0zM391.1 130.8h2.0v10.1h-2.0zM396.4 145.3h2.0v6.9h-2.0zM401.6 86.6h2.0v37.2h-2.0zM404.3 65.7h2.0v10.4h-2.0zM406.9 58.0h2.0v19.8h-2.0zM409.6 35.8h2.0v19.3h-2.0zM428.1 122.4h2.0v9.6h-2.0zM430.7 119.6h2.0v13.3h-2.0zM433.4 116.7h2.0v12.4h-2.0zM438.7 119.7h2.0v12.7h-2.0zM441.3 114.8h2.0v6.9h-2.0zM444.0 100.5h2.0v16.1h-2.0zM454.6 121.5h2.0v13.5h-2.0zM457.2 116.7h2.0v12.7h-2.0zM459.9 112.0h2.0v5.6h-2.0zM462.5 110.1h2.0v7.3h-2.0zM475.7 194.2h2.0v20.5h-2.0zM478.4 182.9h2.0v12.2h-2.0zM483.7 173.8h2.0v16.5h-2.0zM486.3 168.2h2.0v10.3h-2.0zM491.6 163.3h2.0v13.1h-2.0zM494.3 153.2h2.0v16.5h-2.0zM496.9 126.7h2.0v27.5h-2.0zM499.5 109.5h2.0v18.0h-2.0zM502.2 109.7h2.0v12.8h-2.0zM504.8 96.5h2.0v18.6h-2.0zM510.1 76.6h2.0v15.9h-2.0zM515.4 81.9h2.0v18.5h-2.0zM518.1 69.9h2.0v16.4h-2.0zM520.7 63.2h2.0v17.9h-2.0zM528.7 77.4h2.0v27.0h-2.0zM533.9 71.2h2.0v18.8h-2.0zM547.2 162.1h2.0v10.6h-2.0zM549.8 152.7h2.0v19.6h-2.0zM557.8 201.0h2.0v13.2h-2.0zM560.4 190.8h2.0v21.2h-2.0zM568.3 205.4h2.0v23.2h-2.0zM571.0 193.2h2.0v27.6h-2.0zM573.6 195.4h2.0v25.6h-2.0zM576.3 192.4h2.0v31.1h-2.0zM578.9 161.7h2.0v23.3h-2.0zM581.6 147.4h2.0v30.1h-2.0zM584.2 132.4h2.0v31.9h-2.0zM592.2 129.8h2.0v15.0h-2.0zM597.4 135.9h2.0v17.0h-2.0zM600.1 123.4h2.0v7.9h-2.0zM602.7 101.7h2.0v20.4h-2.0zM605.4 69.3h2.0v28.7h-2.0zM618.6 118.3h2.0v12.6h-2.0zM623.9 103.2h2.0v15.6h-2.0zM626.6 82.0h2.0v13.3h-2.0zM629.2 74.6h2.0v11.4h-2.0zM637.1 75.3h2.0v9.5h-2.0zM639.8 62.4h2.0v7.4h-2.0zM642.4 43.0h2.0v21.2h-2.0zM647.7 41.1h2.0v20.3h-2.0zM655.7 55.5h2.0v20.8h-2.0zM668.9 140.9h2.0v11.7h-2.0zM674.2 132.1h2.0v38.4h-2.0zM676.8 141.0h2.0v19.7h-2.0zM679.5 139.6h2.0v15.2h-2.0zM698.0 211.9h2.0v7.7h-2.0zM700.6 204.8h2.0v27.3h-2.0zM705.9 200.4h2.0v7.4h-2.0zM708.6 190.5h2.0v15.6h-2.0zM711.2 188.9h2.0v9.5h-2.0zM748.3 394.0h2.0v23.3h-2.0zM750.9 382.0h2.0v20.5h-2.0zM756.2 391.2h2.0v16.9h-2.0zM764.1 443.3h2.0v30.1h-2.0zM766.8 415.0h2.0v24.2h-2.0zM769.4 393.1h2.0v17.9h-2.0zM777.4 399.8h2.0v14.5h-2.0zM780.0 393.9h2.0v14.6h-2.0zM782.7 379.2h2.0v13.4h-2.0zM793.2 416.4h2.0v19.4h-2.0z" fill="#c6cdd5"/></g>
<line x1="0.0" y1="171.2" x2="119.6" y2="171.2" stroke="#c8420f" stroke-width="1.3" stroke-dasharray="1.35 1.3"/>
<line x1="121.2" y1="112.8" x2="233.3" y2="112.8" stroke="#c8420f" stroke-width="1.3" stroke-dasharray="1.35 1.3"/>
<line x1="234.9" y1="119.0" x2="339.0" y2="119.0" stroke="#c8420f" stroke-width="1.3" stroke-dasharray="1.35 1.3"/>
<line x1="340.5" y1="106.4" x2="412.9" y2="106.4" stroke="#c8420f" stroke-width="1.3" stroke-dasharray="1.35 1.3"/>
<line x1="414.2" y1="24.0" x2="521.7" y2="24.0" stroke="#c8420f" stroke-width="1.3" stroke-dasharray="1.35 1.3"/>
<line x1="523.3" y1="52.0" x2="648.9" y2="52.0" stroke="#c8420f" stroke-width="1.3" stroke-dasharray="1.35 1.3"/>
<line x1="650.1" y1="34.2" x2="770.0" y2="34.2" stroke="#c8420f" stroke-width="1.3" stroke-dasharray="1.35 1.3"/>
<line x1="771.4" y1="364.9" x2="800.0" y2="364.9" stroke="#c8420f" stroke-width="1.3" stroke-dasharray="1.35 1.3"/>
<line x1="0.0" y1="244.5" x2="52.6" y2="244.5" stroke="#69a7d6" stroke-width="1.3" stroke-dasharray="1.3 1.35"/>
<line x1="54.2" y1="262.8" x2="140.0" y2="262.8" stroke="#69a7d6" stroke-width="1.3" stroke-dasharray="1.3 1.35"/>
<line x1="142.0" y1="256.7" x2="254.2" y2="256.7" stroke="#69a7d6" stroke-width="1.3" stroke-dasharray="1.3 1.35"/>
<line x1="255.7" y1="240.5" x2="286.0" y2="240.5" stroke="#69a7d6" stroke-width="1.3" stroke-dasharray="1.3 1.35"/>
<line x1="287.1" y1="255.9" x2="396.0" y2="255.9" stroke="#69a7d6" stroke-width="1.3" stroke-dasharray="1.3 1.35"/>
<line x1="396.0" y1="155.0" x2="429.0" y2="155.0" stroke="#69a7d6" stroke-width="1.3" stroke-dasharray="1.3 1.35"/>
<line x1="432.2" y1="142.6" x2="473.8" y2="142.6" stroke="#69a7d6" stroke-width="1.3" stroke-dasharray="1.3 1.35"/>
<line x1="475.2" y1="229.4" x2="563.6" y2="229.4" stroke="#69a7d6" stroke-width="1.3" stroke-dasharray="1.3 1.35"/>
<line x1="565.1" y1="248.3" x2="765.0" y2="248.3" stroke="#69a7d6" stroke-width="1.3" stroke-dasharray="1.3 1.35"/>
<line x1="766.0" y1="476.6" x2="800.0" y2="476.6" stroke="#69a7d6" stroke-width="1.3" stroke-dasharray="1.3 1.35"/>
<path d="M0.0 200.4C1.3 201.4 5.2 205.0 7.8 206.7C10.5 208.4 13.1 209.6 15.7 210.6C18.3 211.6 20.9 212.3 23.5 212.7C26.1 213.0 28.8 213.0 31.4 212.7C34.0 212.3 36.6 211.8 39.2 210.6C41.8 209.4 44.5 207.3 47.1 205.6C49.7 203.9 52.4 202.6 55.0 200.4C57.6 198.2 60.2 195.5 62.8 192.6C65.4 189.7 68.0 186.5 70.6 183.2C73.2 179.9 75.9 176.4 78.5 173.0C81.1 169.6 83.7 166.2 86.3 162.8C88.9 159.4 91.9 154.8 94.2 152.5C96.5 150.2 98.2 150.5 100.0 149.0C101.8 147.5 103.1 145.2 104.7 143.7C106.3 142.2 107.8 140.7 109.4 139.8C111.0 138.9 112.5 138.7 114.1 138.2C115.7 137.7 117.3 137.1 118.8 136.7C120.2 136.3 121.8 135.8 122.8 135.9C123.8 136.0 124.2 136.6 125.1 137.5C126.0 138.4 127.3 140.1 128.3 141.4C129.4 142.7 130.1 143.7 131.4 145.3C132.7 146.9 134.5 149.0 136.1 150.8C137.7 152.6 139.0 154.5 140.8 156.3C142.6 158.1 145.0 160.1 147.1 161.8C149.2 163.5 151.3 165.1 153.4 166.5C155.5 167.9 157.6 169.2 159.7 170.4C161.8 171.6 164.1 172.8 165.9 173.6C167.7 174.4 169.0 174.8 170.6 175.1C172.2 175.4 173.8 175.5 175.4 175.5C177.0 175.5 178.4 175.4 180.0 175.1C181.6 174.8 183.2 174.2 184.8 173.6C186.4 172.9 187.9 172.0 189.5 171.2C191.1 170.4 192.4 169.7 194.2 168.9C195.9 168.2 198.0 167.4 200.0 166.7C202.0 166.0 204.2 165.1 206.3 164.6C208.4 164.1 210.5 163.8 212.6 163.4C214.7 163.0 217.0 162.7 218.8 162.3C220.6 161.9 221.9 161.6 223.5 161.0C225.1 160.4 226.9 159.9 228.3 159.0C229.8 158.1 231.0 156.9 232.2 155.8C233.4 154.7 234.4 153.1 235.3 152.4C236.2 151.7 236.5 151.7 237.7 151.6C238.9 151.5 241.1 151.8 242.4 152.1C243.7 152.4 244.4 152.6 245.5 153.2C246.6 153.8 247.4 154.3 248.7 155.5C250.0 156.7 251.8 158.8 253.4 160.2C255.0 161.6 256.5 162.9 258.1 164.1C259.7 165.3 261.2 166.3 262.8 167.3C264.4 168.3 265.9 169.2 267.5 170.0C269.1 170.8 270.6 171.4 272.2 172.0C273.8 172.6 275.3 173.2 276.9 173.6C278.5 174.0 280.0 174.3 281.6 174.4C283.2 174.5 284.7 174.7 286.3 174.4C287.9 174.1 289.5 173.5 291.1 172.8C292.7 172.1 294.3 171.3 295.8 170.4C297.3 169.5 298.2 169.0 300.0 167.3C301.8 165.6 304.2 162.2 306.3 160.0C308.4 157.8 310.5 155.9 312.6 153.8C314.7 151.7 316.7 149.4 318.8 147.2C320.9 145.0 323.0 142.7 325.1 140.4C327.2 138.2 329.3 135.9 331.4 133.7C333.5 131.5 335.9 129.3 337.7 127.4C339.5 125.5 341.1 123.6 342.4 122.4C343.7 121.2 344.2 120.7 345.5 120.0C346.8 119.3 348.4 118.9 350.2 118.0C352.0 117.1 354.4 115.8 356.5 114.5C358.6 113.2 360.7 111.5 362.8 110.1C364.9 108.7 367.0 107.5 369.1 106.2C371.2 104.8 373.3 103.3 375.4 102.0C377.5 100.7 379.5 99.5 381.6 98.4C383.7 97.3 385.8 96.4 387.9 95.4C390.0 94.4 392.3 93.4 394.2 92.5C396.1 91.6 397.7 90.7 399.0 90.0C400.3 89.3 400.9 88.9 401.8 88.1C402.7 87.2 403.2 86.4 404.1 84.9C405.0 83.5 406.2 81.6 407.3 79.4C408.4 77.2 409.4 73.9 410.4 71.6C411.4 69.2 412.4 66.8 413.5 65.3C414.6 63.8 415.6 63.0 416.7 62.5C417.8 62.0 418.5 62.2 419.8 62.5C421.1 62.8 422.7 63.4 424.5 64.5C426.3 65.6 428.7 67.3 430.8 68.9C432.9 70.5 435.0 72.5 437.1 74.3C439.2 76.1 441.3 78.0 443.4 79.9C445.5 81.8 447.6 83.8 449.7 85.7C451.8 87.6 453.8 89.5 455.9 91.2C458.0 92.9 460.1 94.5 462.2 95.9C464.3 97.3 466.4 98.7 468.5 99.8C470.6 100.9 473.0 102.1 474.8 102.7C476.6 103.2 477.9 103.1 479.5 103.1C481.1 103.1 482.4 103.3 484.2 102.7C485.9 102.1 488.0 100.5 490.0 99.4C492.0 98.3 494.5 97.2 496.3 96.3C498.1 95.4 499.4 95.2 501.0 93.9C502.6 92.6 504.1 90.2 505.7 88.5C507.3 86.8 508.8 84.9 510.4 83.7C512.0 82.5 513.5 82.2 515.1 81.4C516.7 80.6 518.2 79.7 519.8 79.0C521.4 78.3 522.9 77.8 524.5 77.5C526.1 77.2 527.6 77.0 529.2 77.0C530.8 77.0 532.7 77.0 534.0 77.5C535.3 78.0 536.1 78.8 537.1 79.8C538.1 80.8 538.9 81.9 540.2 83.7C541.5 85.5 543.3 88.4 544.9 90.8C546.5 93.2 548.1 95.7 549.7 97.9C551.3 100.1 552.8 102.1 554.4 104.1C556.0 106.0 557.5 108.0 559.1 109.6C560.7 111.2 562.2 112.5 563.8 113.6C565.4 114.6 566.9 115.5 568.5 115.9C570.1 116.3 571.6 116.3 573.2 116.2C574.8 116.1 576.3 115.9 577.9 115.1C579.5 114.3 581.0 112.9 582.6 111.5C584.2 110.1 586.1 108.0 587.3 106.8C588.5 105.7 588.8 105.9 590.0 104.6C591.2 103.3 593.1 101.3 594.7 98.9C596.3 96.5 597.8 93.2 599.4 90.2C601.0 87.2 602.8 83.4 604.1 80.8C605.4 78.2 606.2 76.4 607.3 74.5C608.3 72.6 609.1 71.2 610.4 69.5C611.7 67.8 613.3 66.0 615.1 64.3C616.9 62.6 619.3 61.0 621.4 59.6C623.5 58.2 625.9 56.7 627.7 55.7C629.5 54.7 630.3 54.1 632.4 53.7C634.5 53.4 637.6 53.6 640.2 53.6C642.8 53.6 646.1 53.3 648.1 53.7C650.1 54.1 650.7 55.4 652.0 56.0C653.3 56.6 654.7 56.5 655.9 57.6C657.1 58.6 658.0 60.5 659.1 62.3C660.2 64.1 661.0 65.9 662.5 68.5C664.0 71.1 666.3 74.4 668.3 77.8C670.3 81.2 672.4 85.0 674.5 89.0C676.6 93.0 678.7 97.0 680.8 101.5C682.9 106.0 685.3 111.5 687.1 116.0C688.9 120.5 690.0 124.0 691.5 128.5C693.0 133.0 694.6 138.1 696.3 143.0C698.0 147.9 699.6 152.4 701.6 157.8C703.6 163.2 706.1 169.9 708.3 175.5C710.4 181.1 712.4 186.2 714.5 191.5C716.6 196.8 718.9 202.8 720.8 207.5C722.7 212.2 724.4 215.6 726.1 220.0C727.8 224.4 729.4 229.2 730.8 233.9C732.2 238.6 733.4 243.2 734.7 248.0C736.0 252.8 737.2 257.9 738.7 263.0C740.2 268.1 741.8 273.6 743.4 278.7C745.0 283.8 746.5 288.8 748.1 293.6C749.7 298.4 751.4 303.4 752.8 307.7C754.2 312.0 755.1 315.9 756.5 319.5C757.9 323.1 759.6 326.3 761.2 329.4C762.8 332.5 764.3 335.4 765.9 338.0C767.5 340.6 769.0 343.0 770.6 345.1C772.2 347.2 773.8 349.0 775.4 350.6C777.0 352.2 778.4 353.7 780.0 354.8C781.6 355.9 783.2 356.8 784.8 357.4C786.4 358.0 787.9 358.3 789.5 358.5C791.1 358.7 792.5 358.7 794.2 358.6C796.0 358.5 799.0 358.1 800.0 358.0" stroke="#ec5fa3" stroke-width="1.55" fill="none" stroke-linejoin="round"/>
<path d="M0.0 247.7C0.5 249.3 2.0 254.5 3.1 257.1C4.2 259.7 5.2 261.6 6.3 263.4C7.3 265.2 8.1 266.8 9.4 268.1C10.7 269.4 12.3 270.5 14.1 271.2C15.9 271.9 18.3 272.2 20.4 272.3C22.5 272.4 24.6 272.3 26.7 272.0C28.8 271.7 30.9 271.2 33.0 270.4C35.1 269.6 37.1 268.5 39.2 267.3C41.3 266.1 43.7 264.7 45.5 263.4C47.3 262.1 48.8 260.3 50.2 259.4C51.7 258.5 52.9 258.6 54.2 257.9C55.5 257.2 56.7 256.3 58.1 255.0C59.5 253.7 61.0 251.9 62.8 250.0C64.6 248.1 67.0 245.9 69.1 243.7C71.2 241.5 73.3 239.3 75.4 236.7C77.5 234.1 79.5 230.9 81.6 228.0C83.7 225.1 85.8 221.9 87.9 219.4C90.0 216.9 92.2 214.7 94.2 213.1C96.2 211.5 98.2 210.7 100.0 209.6C101.8 208.5 103.1 207.2 104.7 206.4C106.3 205.6 107.8 205.1 109.4 204.8C111.0 204.5 112.5 204.5 114.1 204.8C115.7 205.1 117.2 205.7 118.8 206.4C120.4 207.1 121.9 207.8 123.5 209.0C125.1 210.2 127.0 212.0 128.3 213.7C129.6 215.4 130.4 217.1 131.4 219.2C132.4 221.3 133.4 224.2 134.5 226.3C135.6 228.4 136.6 230.2 137.7 231.8C138.8 233.4 139.5 234.3 140.8 235.7C142.1 237.1 143.9 239.1 145.5 240.4C147.1 241.7 148.6 242.7 150.2 243.6C151.8 244.5 153.4 245.3 155.0 245.9C156.6 246.5 157.9 246.8 159.7 247.2C161.5 247.6 164.1 248.1 165.9 248.3C167.7 248.5 169.0 248.4 170.6 248.3C172.2 248.2 173.8 247.9 175.4 247.5C177.0 247.1 178.4 246.5 180.0 245.6C181.6 244.7 183.2 243.1 184.8 242.0C186.4 240.9 187.9 239.9 189.5 238.9C191.1 237.8 192.4 236.8 194.2 235.7C195.9 234.6 198.2 233.6 200.0 232.5C201.8 231.4 203.1 230.0 204.7 229.2C206.3 228.3 207.8 227.8 209.4 227.4C211.0 227.0 212.5 227.2 214.1 226.9C215.7 226.6 217.2 226.3 218.8 225.8C220.4 225.3 221.9 224.3 223.5 223.7C225.1 223.1 226.7 222.5 228.3 222.2C229.9 221.9 231.4 221.6 233.0 221.7C234.6 221.8 236.1 222.1 237.7 222.6C239.3 223.1 240.8 223.8 242.4 224.5C244.0 225.2 245.5 225.8 247.1 226.9C248.7 227.9 250.5 229.5 251.8 230.8C253.1 232.1 253.8 233.4 254.9 234.7C256.0 235.9 257.1 237.4 258.1 238.3C259.2 239.2 259.9 239.8 261.2 240.2C262.5 240.6 264.3 240.7 265.9 241.0C267.5 241.3 269.0 241.5 270.6 241.8C272.2 242.1 273.8 242.6 275.4 243.0C277.0 243.4 278.4 243.8 280.0 244.1C281.6 244.4 283.4 244.4 284.8 244.6C286.2 244.8 287.4 245.5 288.7 245.4C290.0 245.2 291.3 244.6 292.6 243.7C293.9 242.8 295.3 241.2 296.5 240.2C297.7 239.2 298.6 238.9 300.0 237.5C301.4 236.1 303.2 234.0 305.1 231.6C307.0 229.2 309.3 226.1 311.4 223.0C313.5 219.9 315.6 216.0 317.7 212.8C319.8 209.7 321.9 206.9 324.0 204.1C326.1 201.4 328.1 198.7 330.2 196.3C332.3 194.0 334.4 192.0 336.5 190.0C338.6 188.0 340.7 186.2 342.8 184.5C344.9 182.8 347.0 181.4 349.1 179.8C351.2 178.2 353.6 176.5 355.4 175.1C357.2 173.7 358.8 172.3 360.0 171.2C361.2 170.1 361.3 170.2 362.8 168.5C364.3 166.8 367.0 163.2 369.1 161.0C371.2 158.8 373.3 156.7 375.4 155.0C377.5 153.3 379.5 152.2 381.6 151.1C383.7 150.0 385.8 149.3 387.9 148.7C390.0 148.0 392.5 147.3 394.2 147.2C395.9 147.0 397.0 147.7 398.0 147.8C399.0 147.9 399.0 148.7 400.0 148.0C401.0 147.3 402.6 144.9 403.9 143.7C405.2 142.5 406.4 141.5 407.8 140.6C409.2 139.7 411.0 138.7 412.6 138.2C414.2 137.7 415.7 137.6 417.3 137.5C418.9 137.4 420.4 137.5 422.0 137.9C423.6 138.3 425.1 138.8 426.7 139.8C428.3 140.8 429.6 142.4 431.4 143.7C433.2 145.0 435.6 146.4 437.7 147.7C439.8 149.0 441.9 150.3 444.0 151.6C446.1 152.9 448.1 154.2 450.2 155.5C452.3 156.8 454.4 158.2 456.5 159.4C458.6 160.7 461.0 162.0 462.8 163.0C464.6 164.0 466.2 164.6 467.5 165.2C468.8 165.8 469.8 165.9 470.6 166.5C471.4 167.1 471.7 167.6 472.2 168.9C472.7 170.2 473.1 172.3 473.8 174.4C474.5 176.5 475.2 179.3 476.1 181.4C477.0 183.5 478.2 185.3 479.3 186.9C480.4 188.5 481.3 189.8 482.4 190.8C483.4 191.8 484.4 192.6 485.6 192.9C486.8 193.2 488.1 193.2 489.5 192.9C490.9 192.6 492.4 192.4 494.2 191.3C495.9 190.2 498.2 188.0 500.0 186.3C501.8 184.6 503.1 182.8 504.7 181.2C506.3 179.6 507.8 178.0 509.4 176.9C511.0 175.8 512.5 175.0 514.1 174.4C515.7 173.8 517.2 173.5 518.8 173.3C520.4 173.1 521.9 173.1 523.5 173.3C525.1 173.5 526.7 173.9 528.3 174.6C529.9 175.3 531.4 176.2 533.0 177.3C534.6 178.4 536.1 179.6 537.7 181.2C539.3 182.8 540.8 184.7 542.4 186.7C544.0 188.7 545.5 191.2 547.1 193.0C548.7 194.8 550.4 196.1 551.8 197.7C553.2 199.3 554.5 200.4 555.7 202.4C556.9 204.3 557.9 207.2 558.9 209.4C559.9 211.6 561.0 213.5 562.0 215.7C563.0 217.9 564.1 220.6 565.1 222.8C566.1 225.0 567.2 227.4 568.3 229.0C569.3 230.6 570.2 231.4 571.4 232.2C572.6 232.9 574.2 233.5 575.4 233.5C576.6 233.5 577.2 233.2 578.5 232.2C579.8 231.2 581.6 229.5 583.2 227.5C584.8 225.5 586.3 223.0 587.9 220.4C589.5 217.8 591.0 214.8 592.6 211.8C594.2 208.8 596.1 204.7 597.3 202.4C598.5 200.1 598.8 200.4 600.0 198.2C601.2 196.0 603.1 192.3 604.7 189.2C606.3 186.1 607.8 182.8 609.4 179.8C611.0 176.8 612.5 173.7 614.1 171.2C615.7 168.7 617.2 166.7 618.8 164.9C620.4 163.1 621.9 161.6 623.5 160.2C625.1 158.8 626.7 157.3 628.3 156.3C629.9 155.3 631.4 154.7 633.0 154.2C634.6 153.7 636.1 153.5 637.7 153.4C639.3 153.3 640.8 153.2 642.4 153.4C644.0 153.6 645.5 154.0 647.1 154.7C648.7 155.4 650.2 156.5 651.8 157.8C653.4 159.1 654.9 160.7 656.5 162.5C658.1 164.3 659.6 166.6 661.2 168.8C662.8 171.0 664.3 173.4 665.9 175.9C667.5 178.4 669.0 181.1 670.6 183.7C672.2 186.3 673.8 189.0 675.4 191.6C677.0 194.2 678.4 196.8 680.0 199.5C681.6 202.2 683.8 205.5 684.8 208.0C685.8 210.5 685.4 212.5 686.3 214.6C687.2 216.7 688.6 217.7 690.0 220.6C691.4 223.6 693.1 228.3 694.7 232.3C696.3 236.3 697.8 240.7 699.4 244.9C701.0 249.1 702.5 253.3 704.1 257.5C705.7 261.7 707.2 265.8 708.8 270.0C710.4 274.2 711.9 278.4 713.5 282.6C715.1 286.8 716.7 290.8 718.3 295.1C719.9 299.4 721.5 304.2 723.0 308.5C724.5 312.8 726.1 316.8 727.5 320.8C728.9 324.8 730.1 328.6 731.4 332.5C732.7 336.4 734.1 340.4 735.3 344.3C736.5 348.2 737.5 351.8 738.5 356.1C739.5 360.4 740.7 365.8 741.6 370.2C742.5 374.6 743.2 378.6 744.0 382.8C744.8 387.0 745.8 392.7 746.3 395.3C746.8 397.9 746.5 396.0 747.1 398.4C747.8 400.8 749.2 406.0 750.2 409.4C751.2 412.8 752.4 415.7 753.4 418.8C754.4 421.9 755.5 425.2 756.5 428.2C757.5 431.2 758.7 433.9 759.7 436.9C760.8 439.9 761.9 443.3 762.8 446.3C763.7 449.3 764.3 452.5 765.1 454.9C765.9 457.2 766.6 458.8 767.5 460.4C768.4 462.0 769.3 463.2 770.6 464.4C771.9 465.6 773.8 466.8 775.4 467.5C777.0 468.2 778.4 468.5 780.0 468.7C781.6 469.0 783.2 469.1 784.8 469.0C786.4 468.9 787.9 468.8 789.5 468.3C791.1 467.8 792.5 466.9 794.2 465.9C796.0 464.8 799.0 462.6 800.0 462.0" stroke="#0fdc6e" stroke-width="1.55" fill="none" stroke-linejoin="round"/>
<rect x="289.6" y="1.2" width="3.6" height="3.3" fill="#fff"/>
<rect x="289.6" y="493.8" width="3.6" height="3.2" fill="#fff"/>
<rect x="342.6" y="1.2" width="3.6" height="3.3" fill="#fff"/>
<rect x="342.6" y="493.8" width="3.6" height="3.2" fill="#fff"/>
<rect x="567.2" y="1.2" width="3.6" height="3.3" fill="#fff"/>
<rect x="567.2" y="493.8" width="3.6" height="3.2" fill="#fff"/>
<rect x="654.6" y="1.2" width="3.6" height="3.3" fill="#fff"/>
<rect x="654.6" y="493.8" width="3.6" height="3.2" fill="#fff"/>
<rect x="0" y="496.6" width="800" height="1.6" fill="#2c4196"/>
<polyline points="0.0,518.5 8.0,518.5 10.5,536.0 13.0,518.5 39.0,518.5 42.5,502.0 45.5,518.5 50.0,518.5 53.0,536.0 56.5,518.5 119.0,518.5 121.5,502.0 124.5,518.5 138.0,518.5 140.5,536.0 142.7,518.5 146.0,502.0 149.0,518.5 166.0,518.5 169.5,536.0 173.0,518.5 195.5,518.5 198.5,502.0 201.5,518.5 208.7,518.5 212.0,536.0 215.0,518.5 232.5,518.5 235.2,502.0 238.0,518.5 283.0,518.5 285.5,536.0 288.0,518.5 338.7,518.5 341.7,502.0 345.0,518.5 356.5,518.5 360.0,536.0 363.5,518.5 368.0,502.0 372.5,518.5 409.5,518.5 412.5,502.0 415.5,518.5 433.7,518.5 436.7,536.0 440.0,518.5 443.7,518.5 447.0,502.0 450.0,518.5 470.5,518.5 473.3,536.0 476.0,518.5 518.0,518.5 521.0,502.0 524.0,518.5 543.7,518.5 547.5,536.0 553.0,502.0 556.7,518.5 562.5,518.5 565.7,536.0 568.7,518.5 605.5,518.5 608.0,502.0 611.0,518.5 615.5,518.5 618.7,536.0 622.0,518.5 650.0,518.5 653.0,502.0 655.8,518.5 668.0,518.5 672.0,536.0 675.7,518.5 679.5,518.5 683.0,502.0 686.3,518.5 695.0,518.5 698.7,536.0 702.5,518.5 711.0,518.5 714.2,502.0 717.5,518.5 745.5,518.5 749.0,536.0 754.0,502.0 757.5,518.5 761.0,518.5 764.0,536.0 767.0,518.5 772.0,502.0 778.0,536.0 783.7,502.0 791.0,536.0 797.0,508.6 800.0,513.5" stroke="#787878" stroke-width="0.85" fill="none"/>
<rect x="9.2" y="518.5" width="2.6" height="16.5" fill="#14e01e"/>
<rect x="139.2" y="518.5" width="2.6" height="16.5" fill="#14e01e"/>
<rect x="284.2" y="518.5" width="2.6" height="16.5" fill="#14e01e"/>
<rect x="472.0" y="518.5" width="2.6" height="16.5" fill="#14e01e"/>
<rect x="564.4" y="518.5" width="2.6" height="16.5" fill="#14e01e"/>
<rect x="617.4" y="518.5" width="2.6" height="16.5" fill="#14e01e"/>
<rect x="762.7" y="518.5" width="2.6" height="16.5" fill="#14e01e"/>
<rect x="120.4" y="502.5" width="2.2" height="16.5" fill="#f01818"/>
<rect x="234.1" y="502.5" width="2.2" height="16.5" fill="#f01818"/>
<rect x="411.4" y="502.5" width="2.2" height="16.5" fill="#f01818"/>
<rect x="519.9" y="502.5" width="2.2" height="16.5" fill="#f01818"/>
<rect x="606.9" y="502.5" width="2.2" height="16.5" fill="#f01818"/>
<rect x="651.9" y="502.5" width="2.2" height="16.5" fill="#f01818"/>
<rect x="0" y="539.0" width="800" height="1" fill="#2c4196"/>
<rect x="17.9" y="539.0" width="1" height="2.5" fill="#2c4196"/>
<rect x="81.4" y="539.0" width="1" height="2.5" fill="#2c4196"/>
<rect x="144.9" y="539.0" width="1" height="2.5" fill="#2c4196"/>
<rect x="208.4" y="539.0" width="1" height="2.5" fill="#2c4196"/>
<rect x="271.9" y="539.0" width="1" height="2.5" fill="#2c4196"/>
<rect x="335.4" y="539.0" width="1" height="2.5" fill="#2c4196"/>
<rect x="399.0" y="539.0" width="1" height="2.5" fill="#2c4196"/>
<rect x="462.5" y="539.0" width="1" height="2.5" fill="#2c4196"/>
<rect x="526.0" y="539.0" width="1" height="2.5" fill="#2c4196"/>
<rect x="589.5" y="539.0" width="1" height="2.5" fill="#2c4196"/>
<rect x="653.0" y="539.0" width="1" height="2.5" fill="#2c4196"/>
<rect x="716.5" y="539.0" width="1" height="2.5" fill="#2c4196"/>
<rect x="780.0" y="539.0" width="1" height="2.5" fill="#2c4196"/></svg>
<div class="ctext" style="right:718.6px;top:63.6px">EURUSD,M1 1.16405 1.16419 1.16403 1.16405</div>
<div class="ctext" style="right:796px;top:79px">1.16409</div>
<div class="tl" style="left:18.0px">5 Dec 13:38</div>
<div class="tl" style="left:81.5px">5 Dec 14:02</div>
<div class="tl" style="left:145.0px">5 Dec 14:26</div>
<div class="tl" style="left:208.5px">5 Dec 14:50</div>
<div class="tl" style="left:272.0px">5 Dec 15:14</div>
<div class="tl" style="left:335.6px">5 Dec 15:38</div>
<div class="tl" style="left:399.1px">5 Dec 16:02</div>
<div class="tl" style="left:462.6px">5 Dec 16:26</div>
<div class="tl" style="left:526.1px">5 Dec 16:50</div>
<div class="tl" style="left:589.6px">5 Dec 17:14</div>
<div class="tl" style="left:653.1px">5 Dec 17:38</div>
<div class="tl" style="left:716.6px">5 Dec 18:02</div>
<div class="tl" style="left:780.1px">5 Dec 18:26</div>
<div class="tb" style="left:308px;width:71.5px">2025.12.05 15:41</div>
<div class="tb" style="left:255.3px;width:71px">2025.12.05 15:21</div>
<div class="tb" style="left:532.8px;width:71.7px">2025.12.05 17:06</div>
<div class="tb" style="left:620.5px;width:71.5px">2025.12.05 17:39</div>
<div id="tabs" class="abs">
<div class="abs" style="left:0;top:0;width:800px;height:1px;background:#5c5c5c"></div><div class="abs" style="left:0;top:1px;width:800px;height:1px;background:#fcfcfc"></div>
<div class="abs" style="left:35.7px;top:4.4px;width:1.2px;height:11.5px;background:#b9b9b9"></div>
<div class="tab" style="left:-26.8px;color:#8c8c8c">EURUSD,M1</div>
<div class="tab" style="left:45.4px;color:#8c8c8c">EURUSD,M1</div>
<div class="abs" style="left:107px;top:1px;width:70px;height:16px;background:#fff;border:1.1px solid #222;border-top:none"></div>
<div class="tab" style="left:116.6px;color:#2a2a2a">EURUSD,M1</div>
<div class="abs" style="left:0;top:18.4px;width:800px;height:0.8px;background:#e2e2e2"></div><div class="abs" style="left:0;top:19.2px;width:800px;height:3px;background:#f3f3f3"></div><div class="abs" style="left:664.5px;top:19.500px;width:1px;height:3px;background:#d4d4d4"></div><div class="abs" style="left:750.5px;top:19.500px;width:1px;height:3px;background:#d4d4d4"></div>
</div>
</body></html>
